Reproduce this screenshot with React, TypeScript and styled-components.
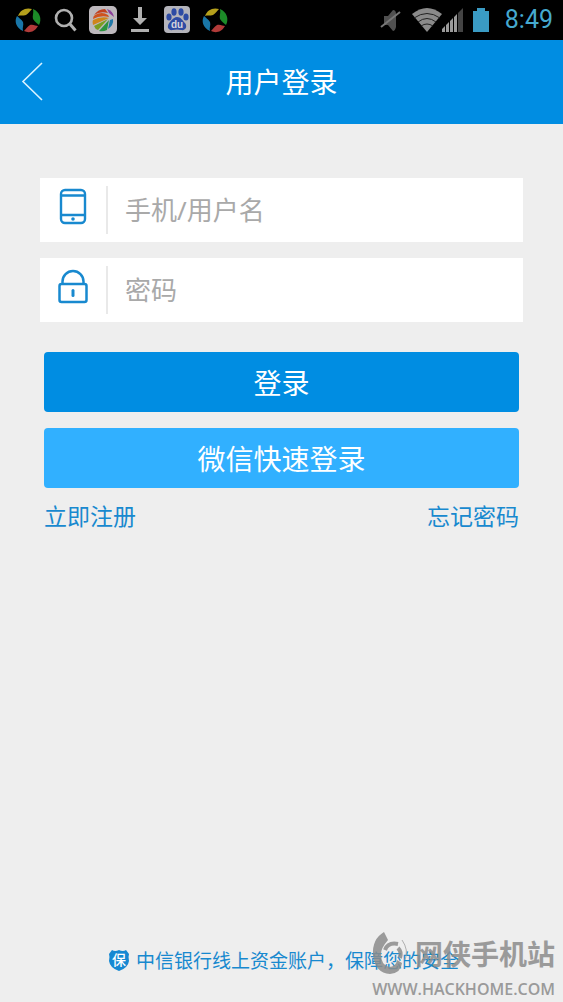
import React from "react";
import styled, { createGlobalStyle } from "styled-components";

const blue = "#008de2";

const Global = createGlobalStyle`
  * { box-sizing: border-box; }
  body {
    margin: 0;
    background: #eeeeee;
    font-family: "Noto Sans", "Noto Sans CJK SC", sans-serif;
  }
`;

const Screen = styled.div`
  min-height: 100vh;
  display: flex;
  flex-direction: column;
  background: #eeeeee;
`;

const StatusBar = styled.div`
  height: 40px;
  padding: 0 10px 0 14px;
  display: flex;
  align-items: center;
  justify-content: space-between;
  background: #000;
`;

const IconGroup = styled.div<{ $gap: number }>`
  display: flex;
  align-items: center;
  gap: ${(p) => p.$gap}px;
`;

const Clock = styled.time`
  margin-left: 8px;
  font-family: Roboto, sans-serif;
  font-size: 25px;
  line-height: 40px;
  color: #45a9cf;
`;

const Header = styled.header`
  height: 84px;
  padding: 0 20px;
  display: grid;
  grid-template-columns: 28px 1fr 28px;
  align-items: center;
  background: ${blue};
`;

const BackButton = styled.button`
  display: flex;
  padding: 0;
  border: 0;
  background: none;
`;

const Title = styled.h1`
  margin: 0;
  text-align: center;
  font-size: 28px;
  line-height: 40px;
  font-weight: 400;
  color: #fff;
`;

const Form = styled.form`
  padding: 54px 40px 0;
  display: flex;
  flex-direction: column;
  gap: 16px;
`;

const Field = styled.label`
  height: 64px;
  padding: 8px 0;
  display: flex;
  background: #fff;
`;

const FieldIcon = styled.span`
  flex: 0 0 68px;
  display: flex;
  justify-content: center;
  border-right: 2px solid #e9e9e9;
`;

const Input = styled.input`
  flex: 1;
  min-width: 0;
  padding: 0 17px;
  border: 0;
  outline: 0;
  background: none;
  font: inherit;
  font-size: 26px;
  color: #333;
  &::placeholder { color: #a9a9a9; opacity: 1; }
`;

const Actions = styled.div`
  padding: 14px 4px 0;
  display: flex;
  flex-direction: column;
  gap: 16px;
`;

const Button = styled.button<{ $light?: boolean }>`
  height: 60px;
  padding: 0;
  border: 0;
  border-radius: 4px;
  background: ${(p) => (p.$light ? "#31b0ff" : blue)};
  color: #fff;
  font: inherit;
  font-size: 28px;
`;

const Links = styled.nav`
  display: flex;
  justify-content: space-between;
`;

const TextLink = styled.a`
  font-size: 23px;
  line-height: 24px;
  color: #1889cf;
  text-decoration: none;
`;

const Footer = styled.footer`
  position: relative;
  margin-top: auto;
  height: 80px;
  padding: 24px 0 0 4px;
  display: flex;
  align-items: flex-start;
  justify-content: center;
  gap: 6px;
`;

const Badge = styled.span`
  position: relative;
  display: grid;
  place-items: center;
  width: 22px;
  height: 28px;
  color: #fff;
  font-size: 14px;
  line-height: 20px;
  svg { position: absolute; top: 3px; left: 0; }
  b { position: relative; font-weight: 500; }
`;

const FooterText = styled.p`
  margin: 0;
  font-family: "Noto Sans CJK SC", sans-serif;
  font-size: 19px;
  line-height: 28px;
  color: #1889cf;
  white-space: nowrap;
`;

const Watermark = styled.div`
  position: absolute;
  right: 8px;
  bottom: 0;
  display: flex;
  flex-direction: column;
  align-items: flex-end;
  color: #8c8c8c;
  opacity: 0.85;
`;

const MarkRow = styled.div`
  display: flex;
  align-items: center;
  font-family: "Noto Sans CJK SC", sans-serif;
  font-size: 28px;
  line-height: 40px;
  font-weight: 700;
`;

const MarkUrl = styled.div`
  font-family: "Open Sans", sans-serif;
  font-size: 16px;
  line-height: 26px;
  font-weight: 600;
`;

const Swirl = () => (
  <svg width="28" height="28" viewBox="0 0 28 28" aria-hidden="true">
    <path d="M4 10C6 4 12 1 18 3C16 5 15 7 12 9C9 10 6 9 4 10Z" fill="#b5a01c" />
    <path d="M19 3C26 6 28 13 25 19C23 17 21 16 19 13C18 10 20 7 19 3Z" fill="#1c8a28" />
    <path d="M24 20C20 27 14 27 10 25C12 23 13 21 16 19C19 18 22 20 24 20Z" fill="#b23b39" />
    <path d="M9 25C2 22 0 15 3 10C5 12 7 13 9 16C10 19 8 22 9 25Z" fill="#1976a8" />
  </svg>
);

export default function App() {
  return (
    <Screen>
      <Global />
      <StatusBar>
        <IconGroup $gap={10}>
          <Swirl />
          <svg width="27" height="28" viewBox="0 0 27 28" fill="none" stroke="#b0b0b0" strokeWidth="2.6" aria-hidden="true">
            <circle cx="12" cy="12" r="8" />
            <path d="M17.500 17.500L23.500 24.500" strokeWidth="3" />
          </svg>
          <svg width="28" height="28" viewBox="0 0 28 28" aria-hidden="true">
            <rect width="28" height="28" rx="5" fill="#bdb8bd" />
            <path d="M5 9Q9 3 16 3L19 7Q11 5 5 9Z" fill="#c2401f" />
            <path d="M4 13Q4 10 6 9Q13 5 19 9L20 11Q11 9 4 13Z" fill="#cf521e" />
            <path d="M18 3Q24 5 25 11L20 7Z" fill="#8c3f9b" />
            <path d="M4 19Q3 16 4 14Q12 10 20 12Z" fill="#d0851a" />
            <path d="M9 24Q6 23 5 20L19 13Z" fill="#7c9d20" />
            <path d="M10 25L20 14L18 24Q14 26 10 25Z" fill="#2d9440" />
            <path d="M21 14L24 13Q25 19 19 23Z" fill="#2178a8" />
          </svg>
          <svg width="26" height="28" viewBox="0 0 26 28" fill="#b0b0b0" aria-hidden="true">
            <path d="M11 1h4v11h5l-7 7-7-7h5zM4 23h18v3H4z" />
          </svg>
          <svg width="28" height="28" viewBox="0 0 28 28" aria-hidden="true">
            <rect x="1" width="26" height="27" rx="4" fill="#b4b4bb" />
            <g fill="#2d4ba4">
              <ellipse cx="6" cy="11" rx="2.600" ry="3.500" />
              <ellipse cx="11" cy="6" rx="2.600" ry="3.800" />
              <ellipse cx="18" cy="6" rx="2.600" ry="3.800" />
              <ellipse cx="23" cy="11" rx="2.600" ry="3.500" />
              <path d="M14 11C18 11 19 14 22 17C25 21 22 25 18 24Q14 23 10 24C5 25 3 20 7 16Q11 11 14 11Z" />
            </g>
            <text x="14" y="22" textAnchor="middle" fontFamily="Liberation Sans" fontWeight="700" fontSize="10" fill="#d5d5dd">du</text>
          </svg>
          <Swirl />
        </IconGroup>
        <IconGroup $gap={4}>
          <svg width="24" height="26" viewBox="0 0 24 26" aria-hidden="true">
            <path d="M5 9h4l5-6q3 0 3 4v13q-1 4-3 4l-5-6H5z" fill="#505050" />
            <path d="M2 20L21 5" stroke="#777" strokeWidth="2" />
          </svg>
          <svg width="58" height="26" viewBox="0 0 58 26" aria-hidden="true">
            <path d="M5 7Q20-5 35 7L20 25Z" fill="#8a8a8a" />
            <path d="M7 11Q20 2 33 11M11 15Q20 8 29 15M14 19Q20 15 26 19" fill="none" stroke="#222" strokeWidth="1" />
            <path d="M35 25v-3l3-3v6zM39 25v-7l3-3v10zM43 25V14l3-3v14zM47 25V10l3-3v18z" fill="#9a9a9a" />
            <path d="M51 25V6l5-5v24z" fill="#444" />
          </svg>
          <svg width="24" height="26" viewBox="0 0 24 26" aria-hidden="true">
            <path d="M8 1h8v3h4v21H4V4h4z" fill="#3a9bc4" />
          </svg>
          <Clock>8:49</Clock>
        </IconGroup>
      </StatusBar>
      <Header>
        <BackButton type="button" aria-label="返回">
          <svg width="26" height="40" viewBox="0 0 26 40" fill="none" stroke="#d9f2ff" strokeWidth="1.6">
            <path d="M22 1L3 19.500L22 38" />
          </svg>
        </BackButton>
        <Title>用户登录</Title>
      </Header>
      <Form onSubmit={(e) => e.preventDefault()}>
        <Field>
          <FieldIcon>
            <svg width="30" height="40" viewBox="0 0 30 40" fill="none" stroke="#1889cf" strokeWidth="2.4" aria-hidden="true">
              <rect x="3" y="4" width="24" height="33" rx="4" />
              <path d="M3 9.500h24M3 29h24" />
              <circle cx="15" cy="33" r="1.8" fill="#1889cf" stroke="none" />
            </svg>
          </FieldIcon>
          <Input type="text" aria-label="手机/用户名" placeholder="手机/用户名" />
        </Field>
        <Field>
          <FieldIcon>
            <svg width="30" height="40" viewBox="0 0 30 40" fill="none" stroke="#1889cf" strokeWidth="2.5" aria-hidden="true">
              <rect x="1.500" y="18" width="27" height="18" rx="2" />
              <path d="M4.500 18v-2.500a10.500 10.500 0 0 1 21 0v2.500" />
              <path d="M15 24.500v5" strokeWidth="3" strokeLinecap="round" />
            </svg>
          </FieldIcon>
          <Input type="password" aria-label="密码" placeholder="密码" />
        </Field>
        <Actions>
          <Button type="submit">登录</Button>
          <Button type="button" $light>微信快速登录</Button>
          <Links>
            <TextLink href="#register">立即注册</TextLink>
            <TextLink href="#forgot">忘记密码</TextLink>
          </Links>
        </Actions>
      </Form>
      <Footer>
        <Badge>
          <svg width="22" height="23" viewBox="0 0 22 23" aria-hidden="true">
            <path d="M4 1Q7 3 11 1Q15 3 18 1L21 5Q20 8 21 12Q20 19 11 22Q2 19 1 12Q2 8 1 5Z" fill="#1688d2" />
          </svg>
          <b>保</b>
        </Badge>
        <FooterText>中信银行线上资金账户，保障您的安全</FooterText>
        <Watermark>
          <MarkRow>
            <svg width="44" height="46" viewBox="0 0 44 46" aria-hidden="true">
              <path d="M13 2Q1 9 2 25Q4 43 19 44Q30 43 31 33L26 30Q25 37 18 37Q10 35 10 24Q10 18 17 10Z" fill="#8c8c8c" />
              <path d="M14 20Q17 12 27 14" fill="none" stroke="#8c8c8c" strokeWidth="4" />
              <path d="M27 18Q31 22 29 28" fill="none" stroke="#8c8c8c" strokeWidth="4" />
              <path d="M31 10Q38 20 34 30" fill="none" stroke="#a5a5a5" strokeWidth="1" />
            </svg>
            网侠手机站
          </MarkRow>
          <MarkUrl>WWW.HACKHOME.COM</MarkUrl>
        </Watermark>
      </Footer>
    </Screen>
  );
}
